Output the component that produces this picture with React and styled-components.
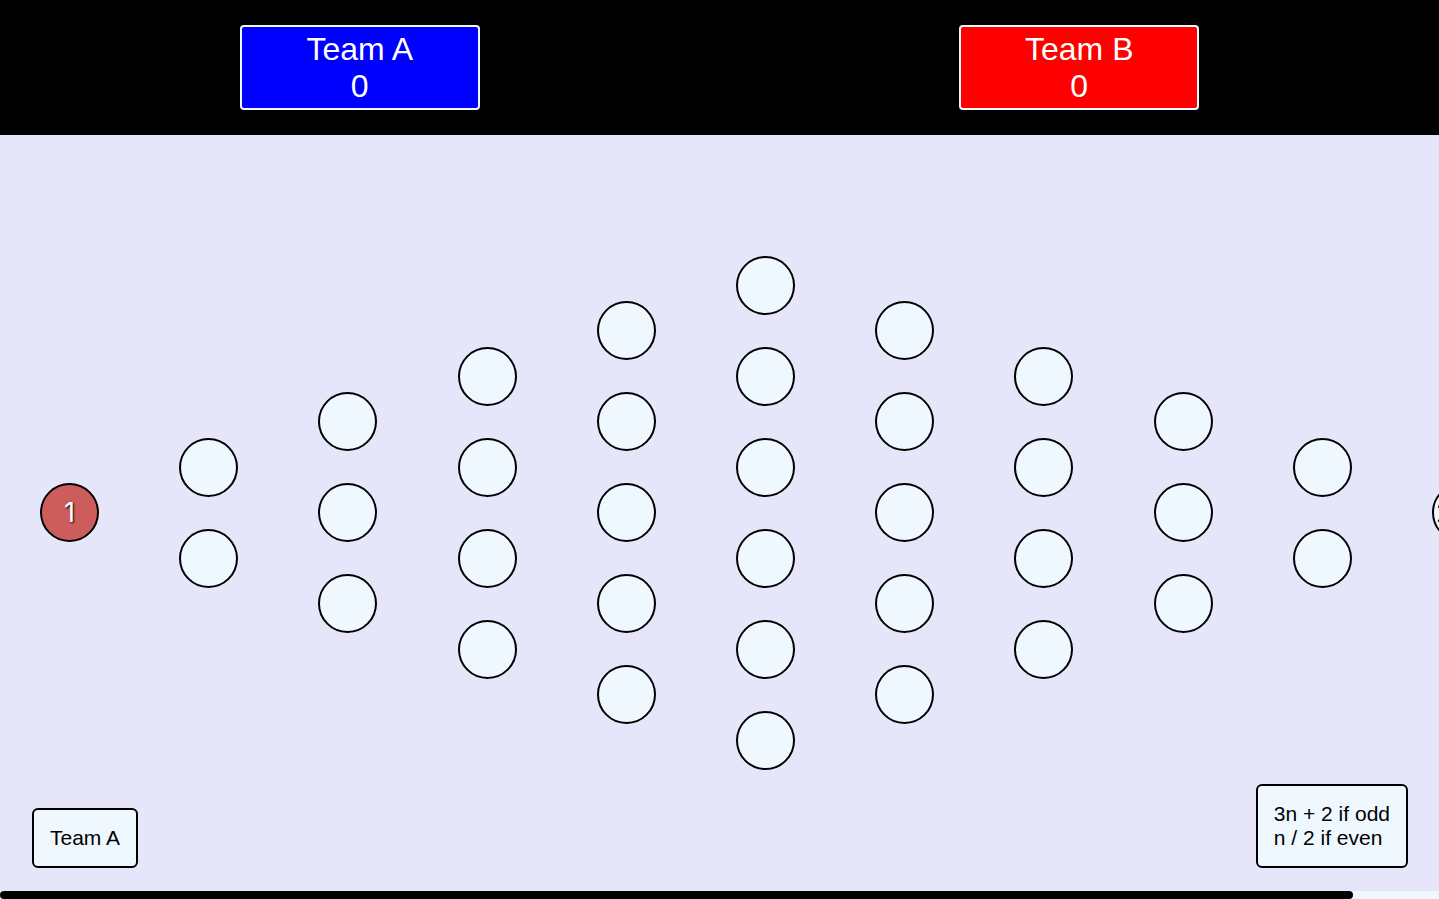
import React, { useEffect, useRef, useState } from "react";
import styled, { createGlobalStyle } from "styled-components";

const GlobalStyle = createGlobalStyle`
  * { box-sizing: border-box; }
  body {
    margin: 0;
    background: lavender;
    color: black;
    font-family: "Liberation Sans", Arial, Helvetica, sans-serif;
  }
`;

const Page = styled.div`
  display: flex;
  flex-direction: column;
  height: 100vh;
`;

const ScoreBar = styled.header`
  display: grid;
  grid-template-columns: 1fr 1fr;
  place-items: center;
  flex: none;
  height: 15vh;
  background: black;
`;

const ScoreCard = styled.section`
  width: 33.33%;
  padding: 4px 0 3px;
  border: 2px solid aliceblue;
  border-radius: 4px;
  background: ${({ $color }) => $color};
  color: white;
  font-size: 32px;
  line-height: 37px;
  text-align: center;
`;

const TeamName = styled.div``;
const Score = styled.div``;

const Scroller = styled.main`
  display: flex;
  flex: 1;
  min-height: 0;
  overflow-x: auto;
  overflow-y: hidden;
  scrollbar-width: none;
`;

const ScrollTrack = styled.div`
  flex: none;
  height: 8px;
  background: aliceblue;
`;

const ScrollThumb = styled.div`
  height: 8px;
  border-radius: 4px;
  background: black;
`;

const Board = styled.div`
  display: flex;
  flex: none;
  justify-content: space-between;
  width: calc(100% + 92px);
  padding: 0 40px;
`;

const Column = styled.div`
  display: flex;
  flex-direction: column;
  justify-content: center;
  gap: 32px;
`;

const Node = styled.button`
  width: 59px;
  height: 59px;
  padding: 0;
  border: 2px solid black;
  border-radius: 50%;
  background: ${({ $active }) => ($active ? "indianred" : "aliceblue")};
  color: ${({ $active }) => ($active ? "white" : "black")};
  font-family: Inter, sans-serif;
  font-size: 27px;
  line-height: 32px;
  text-shadow: ${({ $active }) => ($active ? "1px 1px 2px black" : "none")};
`;

const Note = styled.aside`
  position: fixed;
  bottom: 31px;
  ${({ $side }) => $side}: ${({ $side }) => ($side === "left" ? 32 : 31)}px;
  padding: 16px;
  border: 2px solid black;
  border-radius: 6px;
  background: aliceblue;
  font-size: 21px;
  line-height: 24px;
`;

const Line = styled.div``;

const columns = [1, 2, 3, 4, 5, 6, 5, 4, 3, 2, 1];
const labels = { 0: "1", 10: "200" };

export default function App() {
  const scroller = useRef(null);
  const [thumb, setThumb] = useState({ width: 100, left: 0 });

  useEffect(() => {
    const el = scroller.current;
    const update = () =>
      setThumb({
        width: (el.clientWidth / el.scrollWidth) * 100,
        left: (el.scrollLeft / el.scrollWidth) * 100,
      });
    update();
    el.addEventListener("scroll", update);
    window.addEventListener("resize", update);
    return () => {
      el.removeEventListener("scroll", update);
      window.removeEventListener("resize", update);
    };
  }, []);

  return (
    <>
      <GlobalStyle />
      <Page>
        <ScoreBar>
          <ScoreCard $color="blue">
            <TeamName>Team A</TeamName>
            <Score>0</Score>
          </ScoreCard>
          <ScoreCard $color="red">
            <TeamName>Team B</TeamName>
            <Score>0</Score>
          </ScoreCard>
        </ScoreBar>
        <Scroller ref={scroller}>
          <Board>
            {columns.map((count, c) => (
              <Column key={c}>
                {Array.from({ length: count }, (_, r) => (
                  <Node
                    key={r}
                    type="button"
                    $active={c === 0}
                    aria-label={
                      labels[c] ? undefined : `Column ${c + 1}, row ${r + 1}`
                    }
                  >
                    {labels[c]}
                  </Node>
                ))}
              </Column>
            ))}
          </Board>
        </Scroller>
        <ScrollTrack>
          <ScrollThumb
            style={{ width: `${thumb.width}%`, marginLeft: `${thumb.left}%` }}
          />
        </ScrollTrack>
        <Note $side="left">Team A</Note>
        <Note $side="right">
          <Line>3n + 2 if odd</Line>
          <Line>n / 2 if even</Line>
        </Note>
      </Page>
    </>
  );
}
